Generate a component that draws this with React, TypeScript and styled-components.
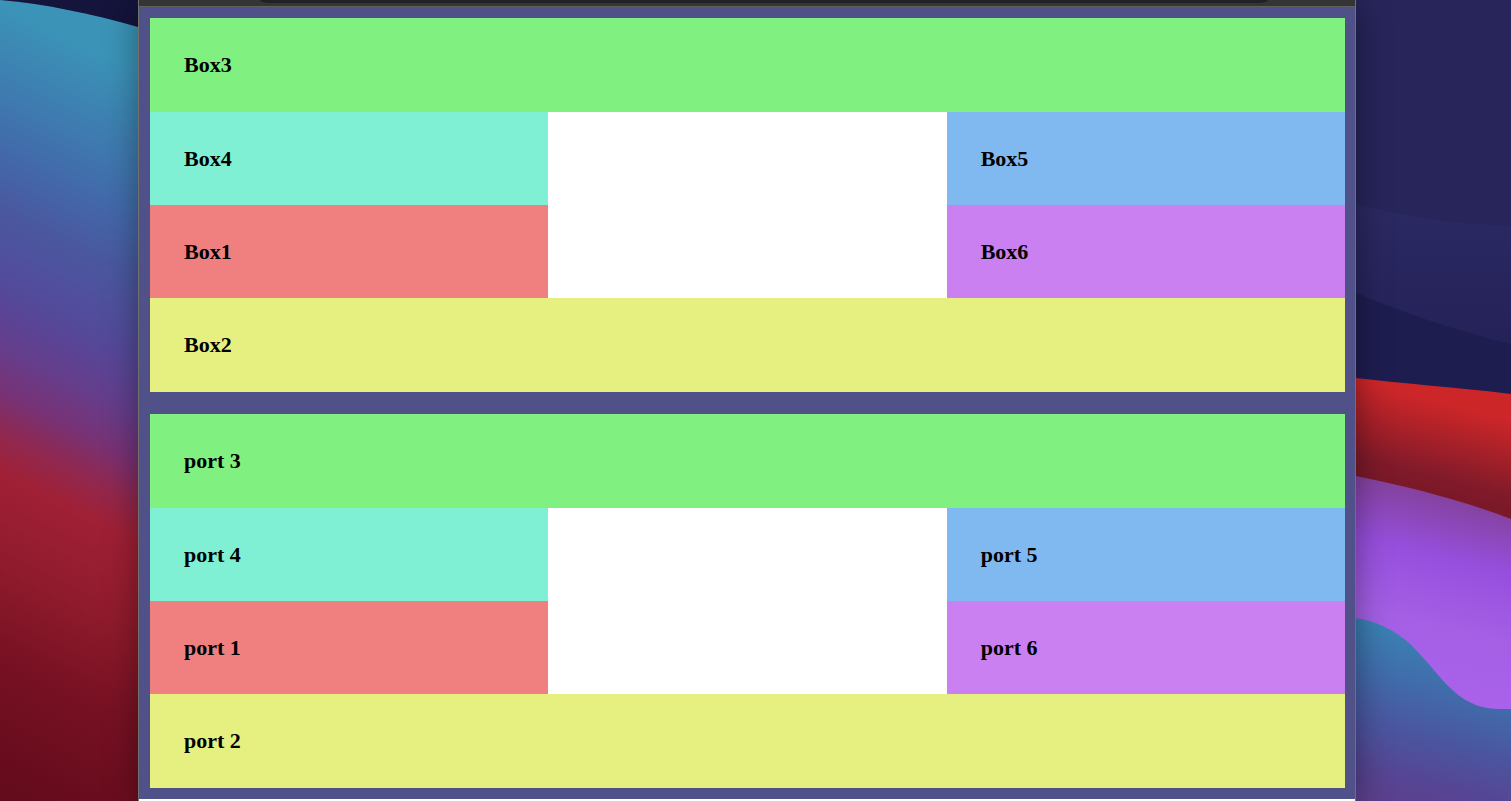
import React from "react";
import styled, { createGlobalStyle } from "styled-components";

const GlobalStyle = createGlobalStyle`
  *, *::before, *::after { box-sizing: border-box; }
  body {
    margin: 0;
    background: #1c1b4a;
    color: #000;
    font-family: "Liberation Serif", "Times New Roman", serif;
  }
`;

const Desktop = styled.div`
  display: grid;
  grid-template-columns: 138px minmax(0, 1fr) 155px;
  min-height: 100vh;
  overflow: hidden;
`;

const Wallpaper = styled.svg`
  display: block;
  width: 100%;
  height: 100%;
`;

const BrowserWindow = styled.div`
  position: relative;
  display: flex;
  flex-direction: column;
  background: #fff;
  border: solid #71716f;
  border-width: 0 1px;
  box-shadow: 0 8px 32px rgba(0, 0, 0, 0.4);
`;

const Toolbar = styled.div`
  height: 7px;
  padding: 0 87px 0 121px;
  background: #353535;
  border-bottom: 1px solid #5f5f5c;
`;

const AddressBar = styled.div`
  height: 3px;
  background: #202124;
  border-radius: 0 0 10px 10px / 0 0 3px 3px;
`;

const Page = styled.main`
  display: flex;
  flex-direction: column;
  gap: 22px;
  padding: 11px 10px 11px 11px;
  background: #51518a;
`;

const Board = styled.section`
  display: grid;
  grid-template-columns: repeat(3, minmax(0, 1fr));
  grid-template-rows:
    minmax(94px, auto) minmax(93px, auto)
    minmax(93px, auto) minmax(94px, auto);
  grid-template-areas:
    "top top top"
    "upperLeft . upperRight"
    "lowerLeft . lowerRight"
    "bottom bottom bottom";
  background: #fff;
`;

const Box = styled.div<{ $area: string; $color: string }>`
  grid-area: ${(p) => p.$area};
  display: flex;
  align-items: center;
  padding: 0 34px;
  background: ${(p) => p.$color};
`;

const BoxTitle = styled.h3`
  margin: 0;
  font-size: 22px;
  line-height: 26px;
  font-weight: 700;
`;

const slots = [
  { n: 3, area: "top", color: "#80f080" },
  { n: 4, area: "upperLeft", color: "#80f0d5" },
  { n: 5, area: "upperRight", color: "#80b8f0" },
  { n: 1, area: "lowerLeft", color: "#f08080" },
  { n: 6, area: "lowerRight", color: "#ca80f0" },
  { n: 2, area: "bottom", color: "#e6f080" },
];

function BoxBoard({ prefix }: { prefix: string }) {
  return (
    <Board>
      {slots.map((s) => (
        <Box key={s.n} $area={s.area} $color={s.color}>
          <BoxTitle>{`${prefix}${s.n}`}</BoxTitle>
        </Box>
      ))}
    </Board>
  );
}

function LeftWallpaper() {
  return (
    <Wallpaper viewBox="0 0 138 801" preserveAspectRatio="none" aria-hidden="true">
      <defs>
        <linearGradient id="dune" gradientUnits="userSpaceOnUse" x1="0" y1="0" x2="-320" y2="640">
          <stop offset="0" stopColor="#3b94b8" />
          <stop offset="0.08" stopColor="#3d82b2" />
          <stop offset="0.18" stopColor="#426bab" />
          <stop offset="0.26" stopColor="#4a58a0" />
          <stop offset="0.36" stopColor="#54499a" />
          <stop offset="0.43" stopColor="#643e8c" />
          <stop offset="0.49" stopColor="#783275" />
          <stop offset="0.54" stopColor="#902850" />
          <stop offset="0.59" stopColor="#a02035" />
          <stop offset="0.7" stopColor="#901b2c" />
          <stop offset="0.82" stopColor="#771123" />
          <stop offset="1" stopColor="#620b1b" />
        </linearGradient>
      </defs>
      <rect width="138" height="801" fill="#14143c" />
      <path d="M0 0 C46 4 92 14 138 27 V801 H0 Z" fill="url(#dune)" />
    </Wallpaper>
  );
}

function RightWallpaper() {
  return (
    <Wallpaper viewBox="0 0 155 801" preserveAspectRatio="none" aria-hidden="true">
      <defs>
        <linearGradient id="ridge" gradientUnits="userSpaceOnUse" x1="0" y1="205" x2="0" y2="340">
          <stop offset="0" stopColor="#2b2962" />
          <stop offset="1" stopColor="#242258" />
        </linearGradient>
        <linearGradient id="red" gradientUnits="userSpaceOnUse" x1="20" y1="385" x2="-5" y2="480">
          <stop offset="0" stopColor="#cd2629" />
          <stop offset="0.4" stopColor="#a42028" />
          <stop offset="0.75" stopColor="#801a2a" />
          <stop offset="1" stopColor="#781828" />
        </linearGradient>
        <linearGradient id="violet" gradientUnits="userSpaceOnUse" x1="0" y1="476" x2="-50" y2="680">
          <stop offset="0" stopColor="#8542a0" />
          <stop offset="0.28" stopColor="#964fdd" />
          <stop offset="0.6" stopColor="#a45fe5" />
          <stop offset="1" stopColor="#ab62ec" />
        </linearGradient>
        <linearGradient id="blue" gradientUnits="userSpaceOnUse" x1="20" y1="625" x2="-25" y2="795">
          <stop offset="0" stopColor="#3a80b4" />
          <stop offset="0.25" stopColor="#406dab" />
          <stop offset="0.55" stopColor="#4b559f" />
          <stop offset="0.8" stopColor="#564594" />
          <stop offset="1" stopColor="#5e3e8a" />
        </linearGradient>
      </defs>
      <rect width="155" height="801" fill="#27255a" />
      <path d="M0 204 C48 217 98 224 155 226 V400 H0 Z" fill="url(#ridge)" />
      <path d="M0 293 C48 313 100 331 155 344 V400 H0 Z" fill="#1e1d50" />
      <path d="M0 378 C48 384 100 387 155 394 V530 H0 Z" fill="url(#red)" />
      <path d="M0 476 C54 487 105 500 155 519 V720 H0 Z" fill="url(#violet)" />
      <path d="M0 618 C20 621 38 630 52 642 C82 669 98 709 143 709 H155 V801 H0 Z" fill="url(#blue)" />
    </Wallpaper>
  );
}

export default function App() {
  return (
    <>
      <GlobalStyle />
      <Desktop>
        <LeftWallpaper />
        <BrowserWindow>
          <Toolbar>
            <AddressBar />
          </Toolbar>
          <Page>
            <BoxBoard prefix="Box" />
            <BoxBoard prefix="port " />
          </Page>
        </BrowserWindow>
        <RightWallpaper />
      </Desktop>
    </>
  );
}
